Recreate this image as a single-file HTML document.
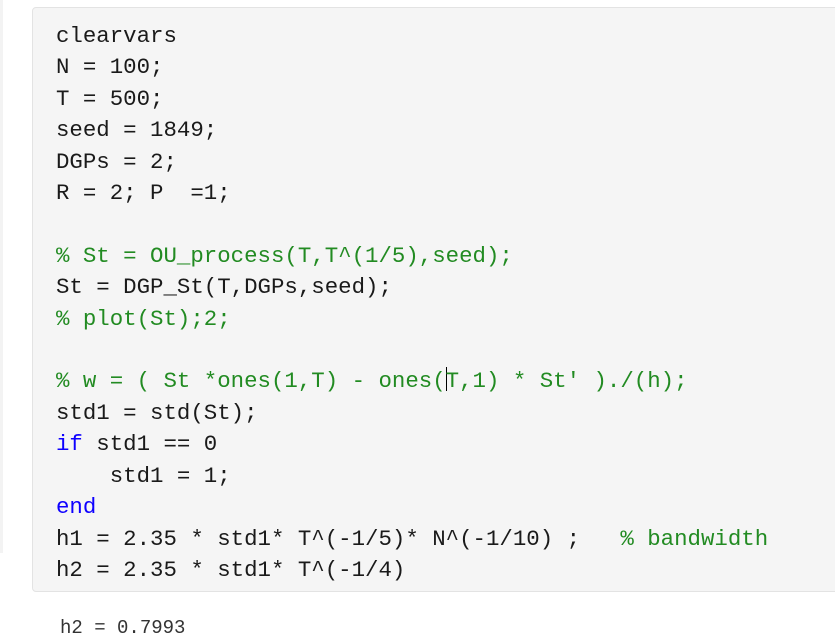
<!DOCTYPE html>
<html><head><meta charset="utf-8"><style>
html,body{margin:0;padding:0;width:835px;height:628px;overflow:hidden;background:#fff;}
.strip{position:absolute;left:0;top:0;width:3px;height:553px;background:#f3f3f3;}
.box{position:absolute;left:32px;top:7px;width:820px;height:585px;background:#f5f5f5;border:1px solid #e3e3e3;border-radius:4px;box-sizing:border-box;}
pre{position:absolute;left:56px;top:21px;margin:0;font-family:"Liberation Mono","DejaVu Sans Mono",monospace;font-size:22.4px;line-height:31.4px;color:#1a1a1a;}
.c{color:#228b22;}.k{color:#0e00ff;}
.cur{display:inline-block;width:1px;height:24px;background:#000;vertical-align:-4px;margin-right:-1px;}
.out{position:absolute;left:60px;top:617px;font-family:"Liberation Mono","DejaVu Sans Mono",monospace;font-size:19px;color:#333;}
</style></head><body>
<div class="strip"></div>
<div class="box"></div>
<pre>clearvars
N = 100;
T = 500;
seed = 1849;
DGPs = 2;
R = 2; P  =1;

<span class="c">% St = OU_process(T,T^(1/5),seed);</span>
St = DGP_St(T,DGPs,seed);
<span class="c">% plot(St);2;</span>

<span class="c">% w = ( St *ones(1,T) - ones(<span class="cur"></span>T,1) * St' )./(h);</span>
std1 = std(St);
<span class="k">if</span> std1 == 0
    std1 = 1;
<span class="k">end</span>
h1 = 2.35 * std1* T^(-1/5)* N^(-1/10) ;   <span class="c">% bandwidth</span>
h2 = 2.35 * std1* T^(-1/4)</pre>
<div class="out">h2 = 0.7993</div>
</body></html>
